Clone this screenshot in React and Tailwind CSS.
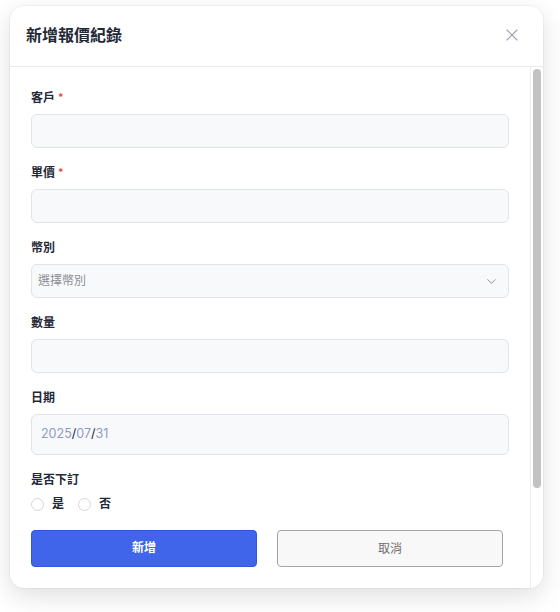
import React, { useState } from 'react';
import { X, ChevronDown } from 'lucide-react';

const FONT = "font-['Inter','Noto_Sans_CJK_TC',sans-serif]";

const Label = ({ children, required }) => (
  <div className="mb-[8px] flex items-center pt-[1px] text-xs leading-4 font-bold text-[#1f2937]">
    {children}
    {required && <span className="ml-[3px] -mt-[3px] text-[10px] text-[#ef4444]">*</span>}
  </div>
);

const inputBox =
  'w-full rounded-md border border-[#e0e3e8] bg-[#f8f9fb] outline-none';

const QuoteModal = () => {
  const [ordered, setOrdered] = useState(null);

  return (
    <div
      className={`flex h-[582px] w-[533px] flex-col overflow-hidden rounded-[14px] bg-white shadow-[0_0_0_1px_rgba(0,0,0,0.04),0_8px_26px_rgba(0,0,0,0.13)] ${FONT}`}
    >
      <div className="flex h-[61px] shrink-0 items-center justify-between border-b border-[#e9eaec] pr-[21px] pb-[3px] pl-4">
        <h2 className="text-base font-bold text-[#1f2937]">新增報價紀錄</h2>
        <button className="text-[#9ca3af]">
          <X size={20} strokeWidth={1.4} />
        </button>
      </div>

      <div className="flex min-h-0 flex-1">
        <div className="flex-1 overflow-hidden pt-[22px] pr-[21px] pl-[21px]">
          <div className="mb-4">
            <Label required>客戶</Label>
            <input className={`${inputBox} h-[34px] px-2 text-xs`} />
          </div>

          <div className="mb-4">
            <Label required>單價</Label>
            <input className={`${inputBox} h-[34px] px-2 text-xs`} />
          </div>

          <div className="mb-4">
            <Label>幣別</Label>
            <div className={`${inputBox} flex h-[34px] items-center justify-between pr-[9px] pl-[6px]`}>
              <span className="text-xs text-[#8b8f97]">選擇幣別</span>
              <ChevronDown size={15} strokeWidth={1.5} className="text-[#858a92]" />
            </div>
          </div>

          <div className="mb-4">
            <Label>數量</Label>
            <input className={`${inputBox} h-[34px] px-2 text-xs`} />
          </div>

          <div className="mb-4">
            <Label>日期</Label>
            <div className={`${inputBox} flex h-[41px] items-center pl-[9px] text-[12.5px]`}>
              <span className="text-[#8c9cc6]">2025</span>
              <span className="text-[#222]">/</span>
              <span className="text-[#8c9cc6]">07</span>
              <span className="text-[#222]">/</span>
              <span className="text-[#8c9cc6]">31</span>
            </div>
          </div>

          <div>
            <Label>是否下訂</Label>
            <div className="flex h-4 items-center gap-[14px]">
              {['是', '否'].map((opt) => (
                <label key={opt} className="flex cursor-pointer items-center gap-2" onClick={() => setOrdered(opt)}>
                  <span
                    className={`h-[13px] w-[13px] rounded-full border bg-white ${
                      ordered === opt ? 'border-[4px] border-[#4065ea]' : 'border-[#d4d6da]'
                    }`}
                  />
                  <span className="text-xs font-semibold text-[#1f2937]">{opt}</span>
                </label>
              ))}
            </div>
          </div>

          <div className="mt-[18px] flex w-[472px] gap-5">
            <button className="h-[37px] flex-1 rounded-[4px] border border-[#2f57e2] bg-[#4065ea] pb-[1px] text-xs font-semibold text-white">
              新增
            </button>
            <button className="h-[37px] flex-1 rounded-[4px] border border-[#a5a5a5] bg-[#f8f8f8] text-xs text-[#6f6f6f]">
              取消
            </button>
          </div>
        </div>

        {/* scrollbar */}
        <div className="w-[13px] shrink-0 border-l border-[#ececec] bg-white pt-[2px] pl-[2px]">
          <div className="h-[419px] w-2 rounded-full bg-[#c2c2c2]" />
        </div>
      </div>
    </div>
  );
};

export default function App() {
  return (
    <div className="min-h-screen bg-white pt-[6px] pl-[10px]">
      <QuoteModal />
    </div>
  );
}
